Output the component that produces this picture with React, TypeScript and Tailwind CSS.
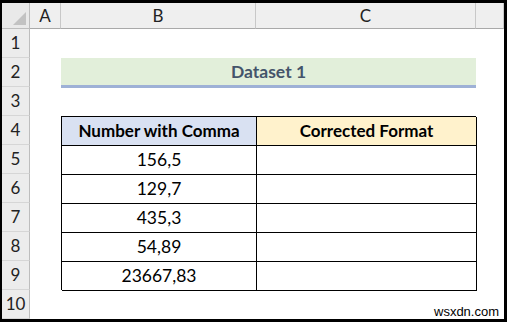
import React from "react";

const rowNums = [1, 2, 3, 4, 5, 6, 7, 8, 9, 10];
const data = ["156,5", "129,7", "435,3", "54,89", "23667,83"];

export default function App() {
  return (
    <div
      className="relative w-[507px] h-[322px] bg-black pt-[3px] pl-[2px] pr-[3px] pb-[3px]"
      style={{ fontFamily: "Lato, 'Noto Sans', sans-serif" }}
    >
      <div className="grid grid-cols-[28px_31px_195px_220px_28px] grid-rows-[26px_repeat(10,29px)] bg-white w-[502px] h-[316px]">
        {/* corner */}
        <div className="relative bg-[#e9e9e9] border-r border-b border-[#bdbdbd]">
          <div className="absolute right-[3px] bottom-[3px] w-0 h-0 border-l-[13px] border-l-transparent border-b-[13px] border-b-[#c2c2c2]" />
        </div>
        {["A", "B", "C", ""].map((c, i) => (
          <div
            key={i}
            className="flex items-center justify-center bg-[#efefef] border-r border-b border-[#c8c8c8] border-b-[#a9a9a9] text-[17px] text-[#222] pt-[1px]"
          >
            {c}
          </div>
        ))}
        {rowNums.map((n) => (
          <div
            key={n}
            className="flex items-center justify-center bg-[#ececec] border-r border-r-[#bdbdbd] border-b border-[#d6d6d6] text-[17px] text-[#222]"
            style={{ gridColumn: 1, gridRow: n + 1 }}
          >
            {n}
          </div>
        ))}
        {/* Dataset title */}
        <div className="col-start-3 col-span-2 row-start-3 flex flex-col">
          <div className="h-[28px] bg-[#e2efda] flex items-center justify-center font-bold text-[17.5px] text-[#44546a]">
            Dataset 1
          </div>
        </div>
        <div className="col-start-3 col-span-2 row-start-3 self-end h-[3px] bg-[#9eb1d6] translate-y-[1px]" />
        {/* table */}
        <div className="col-start-3 col-span-2 row-start-5 row-span-6 grid grid-cols-[195px_220px] grid-rows-[repeat(6,29px)] border-t border-l border-black">
          <div className="bg-[#d9e1f2] border-r border-b border-black flex items-center justify-center font-bold text-[17px] text-black">
            Number with Comma
          </div>
          <div className="bg-[#fff2cc] border-r border-b border-black flex items-center justify-center font-bold text-[17px] text-black">
            Corrected Format
          </div>
          {data.map((d) => (
            <React.Fragment key={d}>
              <div className="border-r border-b border-black flex items-center justify-center text-[17.5px] text-black">
                {d}
              </div>
              <div className="border-r border-b border-black" />
            </React.Fragment>
          ))}
        </div>
      </div>
      <div
        className="absolute left-[434px] top-[302px] text-[13px] text-black"
        style={{ fontFamily: "'Liberation Sans', Arial, sans-serif" }}
      >
        wsxdn.com
      </div>
    </div>
  );
}
